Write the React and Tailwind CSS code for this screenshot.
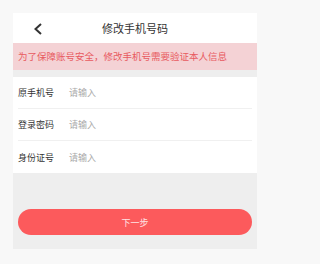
export default function App() {
  const rows = ["原手机号", "登录密码", "身份证号"];
  return (
    <div
      className="w-full min-h-screen bg-[#f8f8f8] pt-[13px] pl-[13px]"
      style={{ fontFamily: '"Noto Sans CJK SC", "Noto Sans", sans-serif' }}
    >
      <div className="w-[244px] h-[236px] bg-[#eeeeee] flex flex-col">
        <div className="h-[30px] bg-white flex items-center relative">
          <svg
            className="absolute left-[20px] top-[10px]"
            width="10"
            height="12"
            viewBox="0 0 10 12"
          >
            <path d="M8 1 L2.5 6 L8 11" fill="none" stroke="#333" strokeWidth="2" />
          </svg>
          <div className="w-full text-center text-[11px] leading-none text-[#333]">
            修改手机号码
          </div>
        </div>
        <div className="h-[27px] bg-[#f4d2d5] flex items-center pl-[5px] text-[9.5px] leading-none text-[#e85a60]">
          为了保障账号安全，修改手机号需要验证本人信息
        </div>
        <div className="mt-[7px] bg-white px-[5px]">
          {rows.map((label, i) => (
            <div
              key={label}
              className={
                "h-[32px] flex items-center text-[9px] leading-none " +
                (i < rows.length - 1 ? "border-b border-[#f0f0f0]" : "")
              }
            >
              <span className="w-[51px] text-[#333]">{label}</span>
              <span className="text-[#aaa]">请输入</span>
            </div>
          ))}
        </div>
        <div className="mt-[36px] mx-[5px] h-[26px] rounded-full bg-[#fc5a5c] flex items-center justify-center text-[9px] leading-none text-[#ffe4e4]">
          下一步
        </div>
      </div>
    </div>
  );
}
